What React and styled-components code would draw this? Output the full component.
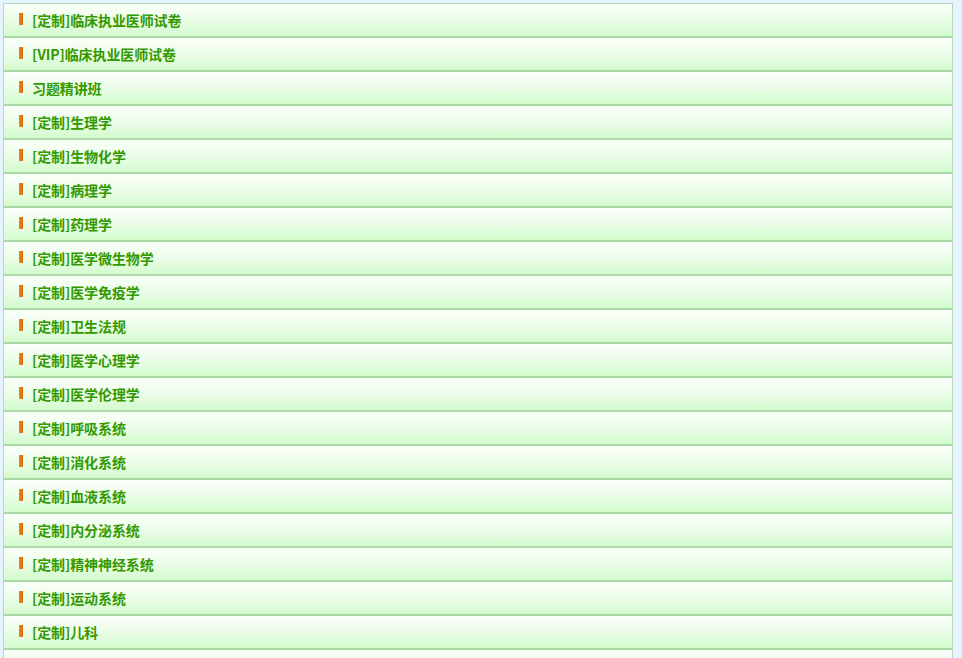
import React from 'react'
import styled, { createGlobalStyle } from 'styled-components'

const GlobalStyle = createGlobalStyle`
  html, body {
    margin: 0;
    padding: 0;
    background: #e6f4ff;
  }
  body {
    font-family: "Noto Sans CJK SC", "Liberation Sans", sans-serif;
  }
`

const List = styled.ul`
  list-style: none;
  margin: 3px 9px 0 3px;
  padding: 0;
  border: 1px solid #b2d8c0;
  border-bottom: none;
  background: #ffffff;
`

const Row = styled.li`
  display: flex;
  align-items: center;
  height: 32px;
  padding-left: 15px;
  background: linear-gradient(to bottom, #fbfffa 0%, #ebfde8 50%, #d3fbcd 100%);
  border-bottom: 2px solid #abd9a6;
  cursor: pointer;
`

const Marker = styled.span`
  width: 4px;
  height: 12px;
  margin-right: 9px;
  margin-top: -2px;
  background: linear-gradient(to right, #f08418, #d86a08);
`

const Label = styled.a`
  font-size: 14px;
  font-weight: bold;
  color: #339900;
  text-decoration: none;
  line-height: 1;
  margin-top: 0;
  letter-spacing: -0.1px;
`

const items = [
  '[定制]临床执业医师试卷',
  '[VIP]临床执业医师试卷',
  '习题精讲班',
  '[定制]生理学',
  '[定制]生物化学',
  '[定制]病理学',
  '[定制]药理学',
  '[定制]医学微生物学',
  '[定制]医学免疫学',
  '[定制]卫生法规',
  '[定制]医学心理学',
  '[定制]医学伦理学',
  '[定制]呼吸系统',
  '[定制]消化系统',
  '[定制]血液系统',
  '[定制]内分泌系统',
  '[定制]精神神经系统',
  '[定制]运动系统',
  '[定制]儿科',
]

const App = () => (
  <>
    <GlobalStyle />
    <List>
      {items.map((t) => (
        <Row key={t}>
          <Marker />
          <Label>{t}</Label>
        </Row>
      ))}
      <Row />
    </List>
  </>
)

export default App
